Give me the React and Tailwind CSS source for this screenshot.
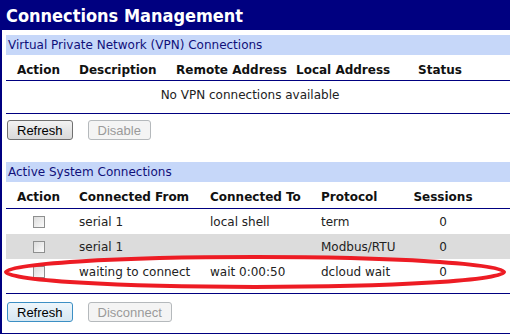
import React from "react";

const FONT = { fontFamily: '"DejaVu Sans", Verdana, sans-serif' };

const vpnCols = "grid-cols-[65px_97px_120px_122px_1fr]";
const sysCols = "grid-cols-[65px_131px_111px_96px_68px]";

const sysRows = [
  { from: "serial 1", to: "local shell", proto: "term", sessions: 0 },
  { from: "serial 1", to: "", proto: "Modbus/RTU", sessions: 0, shaded: true },
  { from: "waiting to connect", to: "wait 0:00:50", proto: "dcloud wait", sessions: 0 },
];

function Btn({ children, disabled, focused }) {
  return (
    <button
      disabled={disabled}
      className={`h-[20px] px-[9px] rounded-[3px] border text-[13px] leading-none ${
        disabled
          ? "border-[#b5b9bc] bg-[#f4f4f4] text-[#9a9a9a]"
          : focused
          ? "border-[#3c8fc4] bg-gradient-to-b from-[#eef6fb] to-[#d6e7f2] text-black"
          : "border-[#707070] bg-gradient-to-b from-[#f2f2f2] to-[#d9d9d9] text-black"
      }`}
      style={{ fontFamily: '"Liberation Sans", Arial, sans-serif' }}
    >
      {children}
    </button>
  );
}

function Checkbox() {
  return <span className="block w-[12px] h-[12px] border border-[#8e8f8f] bg-gradient-to-br from-[#dcdcdc] to-[#fbfbfb]" />;
}

function Band({ children }) {
  return (
    <div className="h-[20px] flex items-center bg-[#c6d7f9] pl-[2px] text-[12px] text-[#10107a]">
      {children}
    </div>
  );
}

export default function App() {
  return (
    <div className="w-[510px] h-[334px] bg-white overflow-hidden text-[#222]" style={FONT}>
      <div
        className="h-[30px] bg-[#000080] flex items-center pl-[6px] pt-[1px] text-white font-bold text-[18px]"
        style={{ fontFamily: '"DejaVu Sans Condensed", "DejaVu Sans", sans-serif' }}
      >
        Connections Management
      </div>
      <div className="h-[304px] border-l-2 border-b border-[#000080] pl-[4px] pt-[5px]">
        <Band>Virtual Private Network (VPN) Connections</Band>

        <div className={`grid ${vpnCols} h-[26px] items-end pb-[1px] font-bold text-[12px] text-[#111] border-b border-[#000080]`}>
          <span className="text-center">Action</span>
          <span className="pl-[8px]">Description</span>
          <span className="pl-[8px]">Remote Address</span>
          <span className="pl-[8px]">Local Address</span>
          <span className="pl-[8px]">Status</span>
        </div>
        <div className="h-[33px] pt-[5px] text-center text-[12px] pr-[16px] border-b border-[#000080]">
          No VPN connections available
        </div>

        <div className="flex gap-[15px] pt-[6px] pl-[1px] h-[48px]">
          <Btn>Refresh</Btn>
          <Btn disabled>Disable</Btn>
        </div>

        <Band>Active System Connections</Band>

        <div className={`grid ${sysCols} h-[27px] items-end pb-[2px] font-bold text-[12px] text-[#111] border-b border-[#000080]`}>
          <span className="text-center">Action</span>
          <span className="pl-[8px]">Connected From</span>
          <span className="pl-[8px]">Connected To</span>
          <span className="pl-[8px]">Protocol</span>
          <span className="text-center">Sessions</span>
        </div>

        <div className="relative pb-[9px] border-b border-[#000080]">
          {sysRows.map((r, i) => (
            <div
              key={i}
              className={`grid ${sysCols} h-[25px] items-center text-[12px] ${r.shaded ? "bg-[#dcdcdc]" : ""}`}
            >
              <span className="flex justify-center pl-[1px]"><Checkbox /></span>
              <span className="pl-[8px]">{r.from}</span>
              <span className="pl-[8px]">{r.to}</span>
              <span className="pl-[8px]">{r.proto}</span>
              <span className="text-center">{r.sessions}</span>
            </div>
          ))}
          <svg className="absolute left-[-6px] top-[45px] pointer-events-none" width="510" height="36" viewBox="0 0 510 36">
            <ellipse cx="255" cy="18" rx="249" ry="15" fill="none" stroke="#ed1c24" strokeWidth="4" />
          </svg>
        </div>

        <div className="flex gap-[15px] pt-[8px] pl-[1px]">
          <Btn focused>Refresh</Btn>
          <Btn disabled>Disconnect</Btn>
        </div>
      </div>
    </div>
  );
}
